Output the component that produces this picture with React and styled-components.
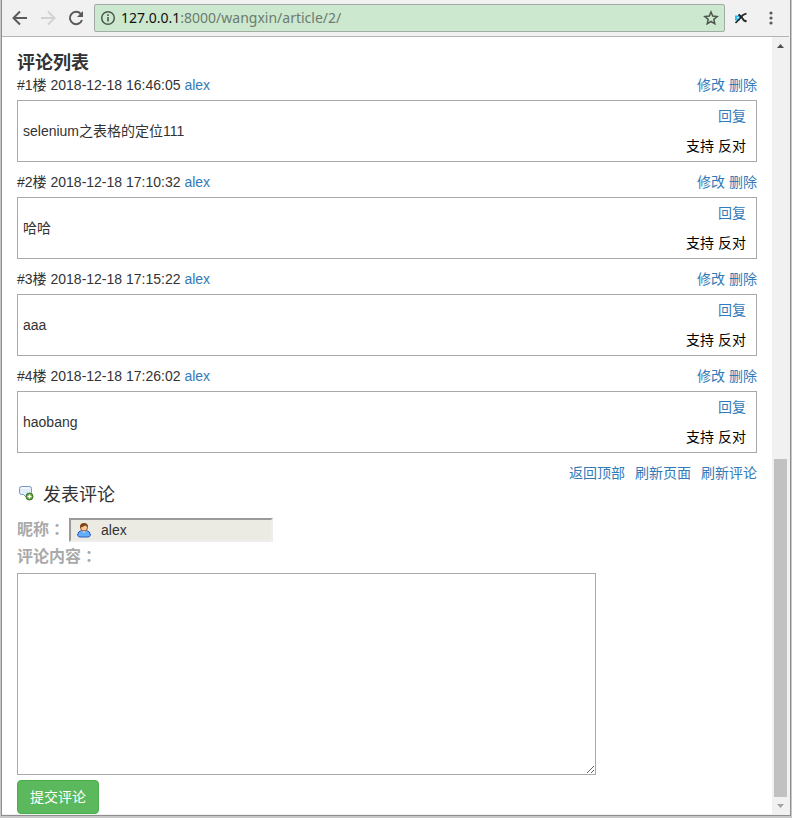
import React from "react";
import styled, { createGlobalStyle } from "styled-components";

const sans = `"Liberation Sans", "Noto Sans CJK SC", sans-serif`;

const GlobalStyle = createGlobalStyle`
  *, *::before, *::after { box-sizing: border-box; }
  body { margin: 0; background: #c8c8c8; font: 14px/20px ${sans}; color: #333; }
  button, input, textarea { font: inherit; color: inherit; }
`;

const Desktop = styled.div`
  height: 100vh;
  padding: 0 1px 2px;
  background: #c8c8c8;
`;

const Window = styled.div`
  display: flex;
  flex-direction: column;
  height: 100%;
  border: 1px solid #8e8e8e;
  border-top: 0;
  padding: 0 1px 1px 0;
  background: #f1f1f1;
`;

const Toolbar = styled.header`
  display: flex;
  align-items: center;
  flex: none;
  height: 37px;
  padding: 0 4px;
  background: #f1f1f1;
  border-bottom: 1px solid #b4b4b4;
`;

const ToolButton = styled.button`
  display: flex;
  align-items: center;
  justify-content: center;
  flex: none;
  width: ${(p) => p.$width || 28}px;
  height: 28px;
  padding: 0;
  border: 0;
  background: none;
  color: ${(p) => (p.disabled ? "#d2d2d2" : "#5a5a5a")};
`;

const AddressBar = styled.div`
  display: flex;
  align-items: center;
  flex: 1;
  min-width: 0;
  height: 28px;
  margin-left: 4px;
  padding: 0 5px;
  gap: 5px;
  background: #cce8cf;
  border: 1px solid #a3aca4;
  border-radius: 2px;
  color: #4d574e;
`;

const Address = styled.div`
  flex: 1;
  font: 14px/20px "Noto Sans", sans-serif;
  color: #6d7b6f;
  span { color: #111; }
`;

const Body = styled.div`
  display: flex;
  flex: 1;
  min-height: 0;
`;

const Page = styled.main`
  flex: 1;
  min-width: 0;
  padding: 15px 15px 0;
  background: #fff;
  overflow: hidden;
`;

const Scrollbar = styled.div`
  display: flex;
  flex-direction: column;
  align-items: center;
  flex: none;
  width: 17px;
  background: #f1f1f1;
`;

const ScrollArrow = styled.button`
  flex: none;
  display: flex;
  align-items: center;
  justify-content: center;
  width: 17px;
  height: 17px;
  padding: 0;
  border: 0;
  background: none;
`;

const Track = styled.div`
  flex: 1;
  display: grid;
  grid-template-rows: 6fr 5fr;
`;

const Thumb = styled.div`
  grid-row: 2;
  width: 13px;
  background: #c1c1c1;
`;

const ListTitle = styled.h2`
  margin: 0;
  font-size: 18px;
  line-height: 22px;
  font-weight: 700;
`;

const Comment = styled.article`
  margin-bottom: 9px;
`;

const CommentHead = styled.div`
  display: flex;
  justify-content: space-between;
  line-height: 22px;
  margin-bottom: 4px;
`;

const Link = styled.a`
  color: #337ab7;
  text-decoration: none;
`;

const CommentBox = styled.div`
  display: flex;
  justify-content: space-between;
  align-items: center;
  height: 62px;
  padding: 0 10px 0 5px;
  border: 1px solid #a9a9a9;
`;

const Votes = styled.div`
  text-align: right;
  line-height: 30px;
  color: #000;
`;

const PageLinks = styled.nav`
  display: flex;
  justify-content: flex-end;
  gap: 10px;
  line-height: 22px;
`;

const FormTitle = styled.h3`
  display: flex;
  align-items: flex-start;
  gap: 8px;
  margin: 0;
  font-size: 18px;
  line-height: 22px;
  font-weight: 400;
`;

const NameRow = styled.div`
  display: flex;
  align-items: center;
  gap: 4px;
  margin: 12px 0 3px;
`;

const Label = styled.label`
  display: block;
  font-size: 16px;
  line-height: 24px;
  font-weight: 700;
  color: #aaa;
`;

const Colon = styled.span`
  font-family: "Noto Sans CJK TC", sans-serif;
  line-height: 20px;
`;

const NameField = styled.div`
  display: flex;
  align-items: center;
  width: 204px;
  height: 24px;
  padding-left: 5px;
  gap: 9px;
  border: 2px solid;
  border-color: #9a9a9a #eee #eee #9a9a9a;
  background: #ebebe4;
`;

const NameInput = styled.input`
  flex: 1;
  min-width: 0;
  padding: 0;
  border: 0;
  background: none;
  outline: 0;
`;

const CommentInput = styled.textarea`
  display: block;
  width: 579px;
  max-width: 100%;
  height: 202px;
  margin: 4px 0 5px;
  border: 1px solid #a9a9a9;
  background: #fff;
  resize: both;
`;

const Submit = styled.button`
  height: 34px;
  padding: 0 12px;
  border: 1px solid #4cae4c;
  border-radius: 4px;
  background: #5cb85c;
  color: #fff;
`;

const comments = [
  { time: "2018-12-18 16:46:05", text: "selenium之表格的定位111" },
  { time: "2018-12-18 17:10:32", text: "哈哈" },
  { time: "2018-12-18 17:15:22", text: "aaa" },
  { time: "2018-12-18 17:26:02", text: "haobang" },
];

const Arrow = ({ flip }) => (
  <svg width="16" height="16" viewBox="0 0 16 16" fill="none" stroke="currentColor" strokeWidth="2">
    <path d={flip ? "M1 8h13M8 1.5 14.5 8 8 14.5" : "M15 8H2M8 1.5 1.5 8 8 14.5"} />
  </svg>
);

const Reload = () => (
  <svg width="16" height="16" viewBox="0 0 16 16">
    <path d="M12.8 3.8A6.2 6.2 0 1 0 14 10" fill="none" stroke="currentColor" strokeWidth="2" />
    <path d="M15 1v6H9z" fill="currentColor" />
  </svg>
);

const Info = () => (
  <svg width="16" height="16" viewBox="0 0 16 16">
    <circle cx="8" cy="8" r="6.3" fill="none" stroke="currentColor" strokeWidth="1.5" />
    <path d="M7.2 7h1.6v4.5H7.2zM7.2 4.3h1.6v1.6H7.2z" fill="currentColor" />
  </svg>
);

const Star = () => (
  <svg width="16" height="16" viewBox="0 0 16 16" fill="none" stroke="currentColor" strokeWidth="1.5">
    <path d="m8 2 1.7 4.1 4.5.4-3.4 2.9 1 4.4L8 11.5l-3.8 2.3 1-4.4-3.4-2.9 4.5-.4z" />
  </svg>
);

const Extension = () => (
  <svg width="14" height="14" viewBox="0 0 14 14">
    <path d="M1 4.5h5v5H1z" fill="#25bdf3" />
    <path d="M3 6h2v1.5H3z" fill="#c9f2ff" />
    <path d="M1.5 12 5 8.5 9 4l3.5-1.5" fill="none" stroke="#222" strokeWidth="1.7" />
    <path d="M4.5 3.5 7 5.5 10 9.5l2.5 1" fill="none" stroke="#222" strokeWidth="1.9" />
  </svg>
);

const Dots = () => (
  <svg width="4" height="16" viewBox="0 0 4 16" fill="currentColor">
    <circle cx="2" cy="3" r="1.6" />
    <circle cx="2" cy="8" r="1.6" />
    <circle cx="2" cy="13" r="1.6" />
  </svg>
);

const AddComment = () => (
  <svg width="18" height="18" viewBox="0 0 18 18">
    <path
      d="M4.5 2.5h8q2 0 2 2v4q0 2-2 2H9.5v3l-3-3h-2q-2 0-2-2v-4q0-2 2-2z"
      fill="#e3edf9"
      stroke="#7598c8"
      strokeLinejoin="round"
    />
    <path d="M4.5 4h8" stroke="#fff" />
    <circle cx="12.5" cy="12.5" r="3.5" fill="#62a33c" stroke="#3c7425" />
    <path d="M12.5 10.5v4M10.5 12.5h4" stroke="#fff" strokeWidth="1.4" />
  </svg>
);

const Person = () => (
  <svg width="16" height="16" viewBox="0 0 16 16">
    <path d="M1.5 13q.5-4 4-4.5h5q3.500.5 4 4.500-.5 2-2.500 2h-8q-2 0-2.500-2z" fill="#65aefb" stroke="#2c5cbe" />
    <path d="M6 8.500h4L8 11z" fill="#d5eaff" />
    <circle cx="8" cy="5.500" r="3.500" fill="#f7c898" stroke="#9c5c30" />
    <path d="M4 6q-.5-5 4-5t4 5q-1-2-2.500-2.500Q6 5 4 6z" fill="#824719" />
  </svg>
);

export default function App() {
  return (
    <Desktop>
      <GlobalStyle />
      <Window>
        <Toolbar>
          <ToolButton aria-label="Back"><Arrow /></ToolButton>
          <ToolButton aria-label="Forward" disabled><Arrow flip /></ToolButton>
          <ToolButton aria-label="Reload"><Reload /></ToolButton>
          <AddressBar>
            <Info />
            <Address><span>127.0.0.1</span>:8000/wangxin/article/2/</Address>
            <Star />
          </AddressBar>
          <ToolButton aria-label="Extension" $width={32}><Extension /></ToolButton>
          <ToolButton aria-label="Menu"><Dots /></ToolButton>
        </Toolbar>
        <Body>
          <Page>
            <ListTitle>评论列表</ListTitle>
            {comments.map((c, i) => (
              <Comment key={c.time}>
                <CommentHead>
                  <span>#{i + 1}楼 {c.time} <Link href="#">alex</Link></span>
                  <span><Link href="#">修改</Link> <Link href="#">删除</Link></span>
                </CommentHead>
                <CommentBox>
                  <span>{c.text}</span>
                  <Votes>
                    <div><Link href="#">回复</Link></div>
                    <div>支持 反对</div>
                  </Votes>
                </CommentBox>
              </Comment>
            ))}
            <PageLinks>
              <Link href="#">返回顶部</Link>
              <Link href="#">刷新页面</Link>
              <Link href="#">刷新评论</Link>
            </PageLinks>
            <FormTitle><AddComment />发表评论</FormTitle>
            <NameRow>
              <Label htmlFor="nick">昵称<Colon>：</Colon></Label>
              <NameField>
                <Person />
                <NameInput id="nick" defaultValue="alex" readOnly />
              </NameField>
            </NameRow>
            <Label htmlFor="content">评论内容<Colon>：</Colon></Label>
            <CommentInput id="content" />
            <Submit type="button">提交评论</Submit>
          </Page>
          <Scrollbar>
            <ScrollArrow aria-label="Scroll up">
              <svg width="7" height="4"><path d="M3.5 0 7 4H0z" fill="#505050" /></svg>
            </ScrollArrow>
            <Track><Thumb /></Track>
            <ScrollArrow aria-label="Scroll down">
              <svg width="7" height="4"><path d="M0 0h7L3.5 4z" fill="#a3a3a3" /></svg>
            </ScrollArrow>
          </Scrollbar>
        </Body>
      </Window>
    </Desktop>
  );
}
